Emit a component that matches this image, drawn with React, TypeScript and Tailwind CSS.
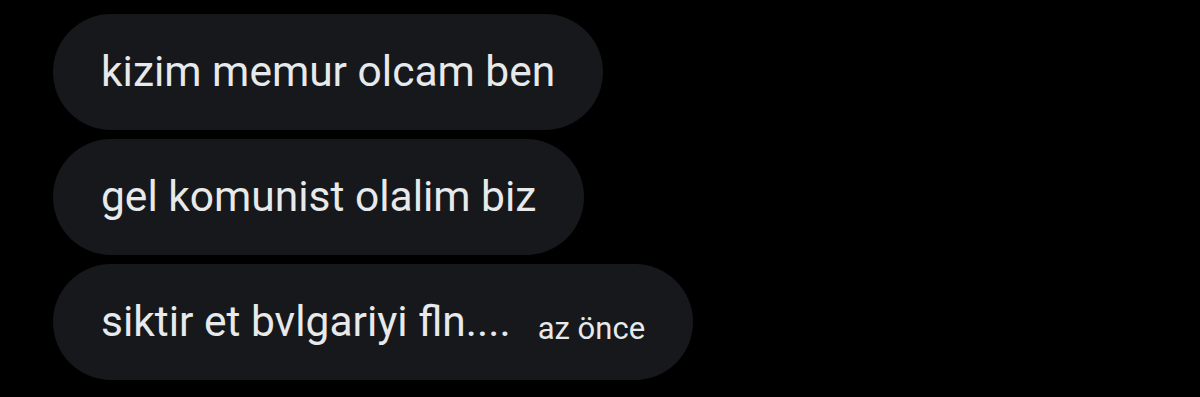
import React from 'react';

const messages = ['kizim memur olcam ben', 'gel komunist olalim biz', 'siktir et bvlgariyi fln....'];

const App: React.FC = () => {
  return (
    <div className="w-[1200px] h-[397px] bg-black pt-[14px] pl-[53px] flex flex-col items-start gap-[9px] font-['Roboto',sans-serif] overflow-hidden">
      {messages.map((text, i) => (
        <div
          key={i}
          className="h-[116px] rounded-full bg-[#16181c] px-[48px] flex items-baseline pt-[37px] text-[#e7e9ea]"
        >
          <span className="text-[42.5px] leading-none">{text}</span>
          {i === messages.length - 1 && (
            <span className="ml-[27px] relative top-[3px] text-[31px] leading-none">az önce</span>
          )}
        </div>
      ))}
    </div>
  );
};

export default App;
